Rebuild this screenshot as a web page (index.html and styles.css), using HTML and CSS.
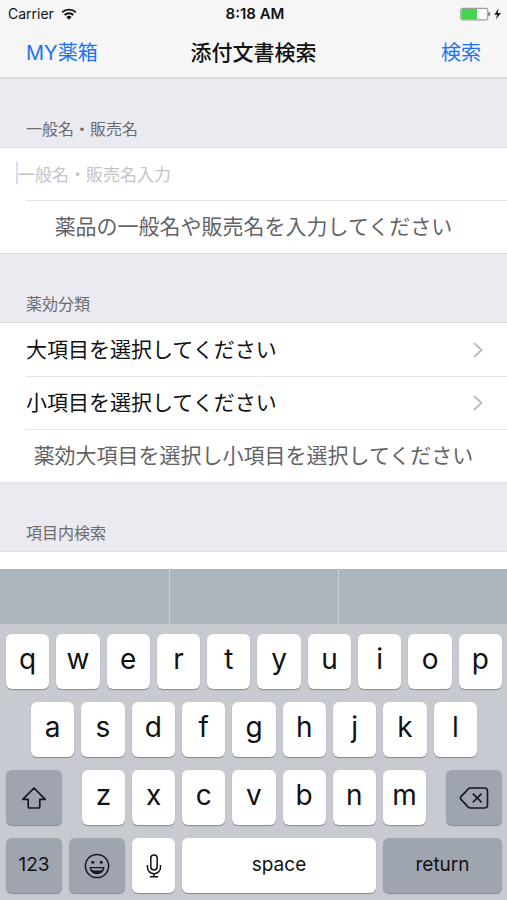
FILE: index.html
```html
<!DOCTYPE html>
<html lang="ja">
<head>
<meta charset="utf-8">
<meta name="viewport" content="width=device-width, initial-scale=1">
<title>添付文書検索</title>
<link rel="stylesheet" href="styles.css">
</head>
<body>
<header class="top">
  <div class="status">
    <div class="status-side">
      <span>Carrier</span>
      <svg class="wifi" viewBox="0 0 16 12" width="16" height="12" aria-hidden="true">
        <path d="M1.2 4.4a9.8 9.8 0 0 1 13.6 0M3.6 7a6.3 6.3 0 0 1 8.8 0" fill="none" stroke="#111" stroke-width="1.9"/>
        <path d="M8 11.8 5.4 9.1a3.7 3.7 0 0 1 5.2 0z" fill="#111"/>
      </svg>
    </div>
    <span class="clock">8:18 AM</span>
    <div class="status-side status-end">
      <svg viewBox="0 0 42 14" width="42" height="14" aria-hidden="true">
        <rect x="0.8" y="1.3" width="27" height="11.6" rx="1.8" fill="#fafafa" stroke="#888" stroke-width="1"/>
        <path d="M1.5 2h15.5v10.2H1.5z" fill="#43d551"/>
        <path d="M28.6 5.2h1.1v3.6h-1.1z" fill="#333"/>
        <path d="M38.5 1.6 34.3 7.7h3l-1.4 4.8 5-6.4h-3.2z" fill="#111"/>
      </svg>
    </div>
  </div>
  <nav class="nav">
    <a class="nav-link" href="#box">MY薬箱</a>
    <h1 class="title">添付文書検索</h1>
    <a class="nav-link nav-end" href="#search">検索</a>
  </nav>
</header>

<main class="form">
  <h2 class="heading"><label for="name">一般名・販売名</label></h2>
  <div class="list">
    <div class="row field"><input id="name" class="input" type="text" placeholder="一般名・販売名入力"></div>
    <p class="row hint">薬品の一般名や販売名を入力してください</p>
  </div>

  <h2 class="heading">薬効分類</h2>
  <div class="list">
    <button class="row choice" type="button">大項目を選択してください
      <svg viewBox="0 0 10 16" width="10" height="16" aria-hidden="true"><path d="m1 1 7.5 7L1 15" fill="none" stroke="#bdbdc1" stroke-width="1.9"/></svg>
    </button>
    <button class="row choice" type="button">小項目を選択してください
      <svg viewBox="0 0 10 16" width="10" height="16" aria-hidden="true"><path d="m1 1 7.5 7L1 15" fill="none" stroke="#bdbdc1" stroke-width="1.9"/></svg>
    </button>
    <p class="row hint">薬効大項目を選択し小項目を選択してください</p>
  </div>

  <h2 class="heading">項目内検索</h2>
  <div class="list list-last"></div>
</main>

<section class="keyboard" aria-label="キーボード">
  <div class="suggestions"><span></span><span></span><span></span></div>
  <div class="keys">
    <div class="key-row">
      <button class="key">q</button><button class="key">w</button><button class="key">e</button><button class="key">r</button><button class="key">t</button><button class="key">y</button><button class="key">u</button><button class="key">i</button><button class="key">o</button><button class="key">p</button>
    </div>
    <div class="key-row key-row-inset">
      <button class="key">a</button><button class="key">s</button><button class="key">d</button><button class="key">f</button><button class="key">g</button><button class="key">h</button><button class="key">j</button><button class="key">k</button><button class="key">l</button>
    </div>
    <div class="key-row key-row-shift">
      <button class="key dark wide" aria-label="shift">
        <svg viewBox="0 0 26 24" width="26" height="24" aria-hidden="true"><path d="M13 2 1.8 13.4h5.4v6.8q0 1.8 1.8 1.8h8q1.8 0 1.8-1.8v-6.8h5.4z" fill="none" stroke="#14181f" stroke-width="1.7" stroke-linejoin="round"/></svg>
      </button>
      <div class="letters">
        <button class="key">z</button><button class="key">x</button><button class="key">c</button><button class="key">v</button><button class="key">b</button><button class="key">n</button><button class="key">m</button>
      </div>
      <button class="key dark wide" aria-label="delete">
        <svg viewBox="0 0 30 22" width="30" height="22" aria-hidden="true"><path d="M11.5 1h14q3 0 3 3v14q0 3-3 3h-14q-1.3 0-2.2-.9L2 12.4q-1.2-1.4 0-2.8l7.3-7.7q.9-.9 2.2-.9zM13.8 6.6l8.800 8.800m0-8.800-8.800 8.800" fill="none" stroke="#14181f" stroke-width="1.6"/></svg>
      </button>
    </div>
    <div class="key-row">
      <button class="key dark wide text">123</button>
      <button class="key dark wide" aria-label="emoji">
        <svg viewBox="0 0 26 26" width="26" height="26" aria-hidden="true">
          <circle cx="13" cy="13" r="11.6" fill="none" stroke="#14181f" stroke-width="1.5"/>
          <circle cx="8.8" cy="9.2" r="1.5" fill="#14181f"/><circle cx="17.2" cy="9.2" r="1.5" fill="#14181f"/>
          <path d="M5.6 14h14.8c0 4.3-3.3 7.2-7.4 7.2S5.6 18.3 5.6 14z" fill="#14181f"/>
          <path d="M7.2 15.2h11.6l-.6 1.9q-5.2 1-10.4 0z" fill="#9fa5af"/>
        </svg>
      </button>
      <button class="key mic" aria-label="dictation">
        <svg viewBox="0 0 16 24" width="16" height="24" aria-hidden="true"><rect x="4.8" y="1" width="6.4" height="15" rx="3.2" fill="none" stroke="#111" stroke-width="1.5"/><path d="M1.5 11v2.5a6.5 6.2 0 0 0 13 0V11M8 19.7v3M3.8 22.8h8.4" fill="none" stroke="#111" stroke-width="1.5"/></svg>
      </button>
      <button class="key space text">space</button>
      <button class="key dark return text">return</button>
    </div>
  </div>
</section>
</body>
</html>
```
FILE: styles.css
```css
* {
  box-sizing: border-box;
}

body {
  margin: 0;
  height: 100vh;
  display: flex;
  flex-direction: column;
  background: #ebeaf0;
  color: #111;
  font-family: Inter, "Noto Sans CJK JP", sans-serif;
}

h1, h2, p {
  margin: 0;
  font-weight: 400;
}

button {
  margin: 0;
  padding: 0;
  border: 0;
  color: inherit;
  font: inherit;
}

.top {
  background: #f6f6f6;
  border-bottom: 2px solid #dddde0;
}

.status {
  display: grid;
  grid-template-columns: 1fr auto 1fr;
  align-items: center;
  padding: 4px 5px 0 8px;
  font-size: 14px;
  line-height: 20px;
}

.status-side {
  display: flex;
  align-items: center;
  gap: 7px;
}

.status-end {
  justify-content: flex-end;
}

.clock {
  font-size: 15px;
  font-weight: 600;
}

.nav {
  display: grid;
  grid-template-columns: 1fr auto 1fr;
  align-items: center;
  padding: 13px 26px 8px;
  font-size: 20px;
  line-height: 32px;
}

.nav-link {
  color: #1a72fb;
  text-decoration: none;
}

.nav-end {
  text-align: right;
}

.title {
  font-size: 21px;
  font-weight: 500;
}

.form {
  flex: 1;
  min-height: 0;
  display: flex;
  flex-direction: column;
  overflow: hidden;
}

.heading {
  padding: 38px 26px 5px;
  border-bottom: 1px solid #e0dfe5;
  color: #6b6b70;
  font-size: 16px;
  line-height: 25px;
}

.list {
  background: #fff;
  border-bottom: 1px solid #e0dfe5;
}

.list-last {
  flex: 1;
  border: 0;
}

.row {
  display: flex;
  align-items: center;
  width: 100%;
  min-height: 53px;
  background: #fff;
  font-size: 21px;
  line-height: 32px;
}

.field {
  min-height: 52px;
  padding: 0 16px 2px;
}

.input {
  width: 100%;
  height: 22px;
  padding: 0;
  border: 0;
  border-left: 2px solid #dcdcfa;
  outline: 0;
  background: none;
  font: 17px "Noto Sans CJK JP", sans-serif;
}

.input::placeholder {
  color: #c4c4c8;
}

.hint {
  justify-content: center;
  color: #636366;
}

.choice {
  justify-content: space-between;
  padding: 0 24px 0 26px;
  text-align: left;
}

.row + .row {
  border-top: 1px solid transparent;
  background: linear-gradient(#e4e4e7, #e4e4e7) 26px 0 / 100% 1px no-repeat border-box, #fff;
}

.keyboard {
  background: #c8cad2;
}

.suggestions {
  display: grid;
  grid-template-columns: repeat(3, 1fr);
  height: 55px;
  background: #adb5bd;
}

.suggestions span + span {
  border-left: 1px solid #cbd1d7;
}

.keys {
  display: flex;
  flex-direction: column;
  gap: 13px;
  padding: 10px 5px 7px 6px;
}

.key-row,
.letters {
  display: flex;
  gap: 7px;
}

.key-row-inset {
  padding: 0 25px;
}

.key-row-shift {
  gap: 20px;
}

.letters {
  flex: 1;
}

.key {
  flex: 1 1 0;
  min-width: 0;
  height: 55px;
  padding-bottom: 5px;
  border-radius: 6px;
  background: #fff;
  box-shadow: 0 1px 1px #85888f;
  font-size: 28px;
  line-height: 36px;
}

.key svg {
  display: block;
  margin: 6px auto 0;
}

.dark {
  background: #9fa5af;
}

.wide {
  flex: 0 0 56px;
}

.mic {
  flex: 0 0 43px;
}

.return {
  flex: 0 0 119px;
}

.text {
  padding-bottom: 2px;
  font-size: 19px;
}
```
